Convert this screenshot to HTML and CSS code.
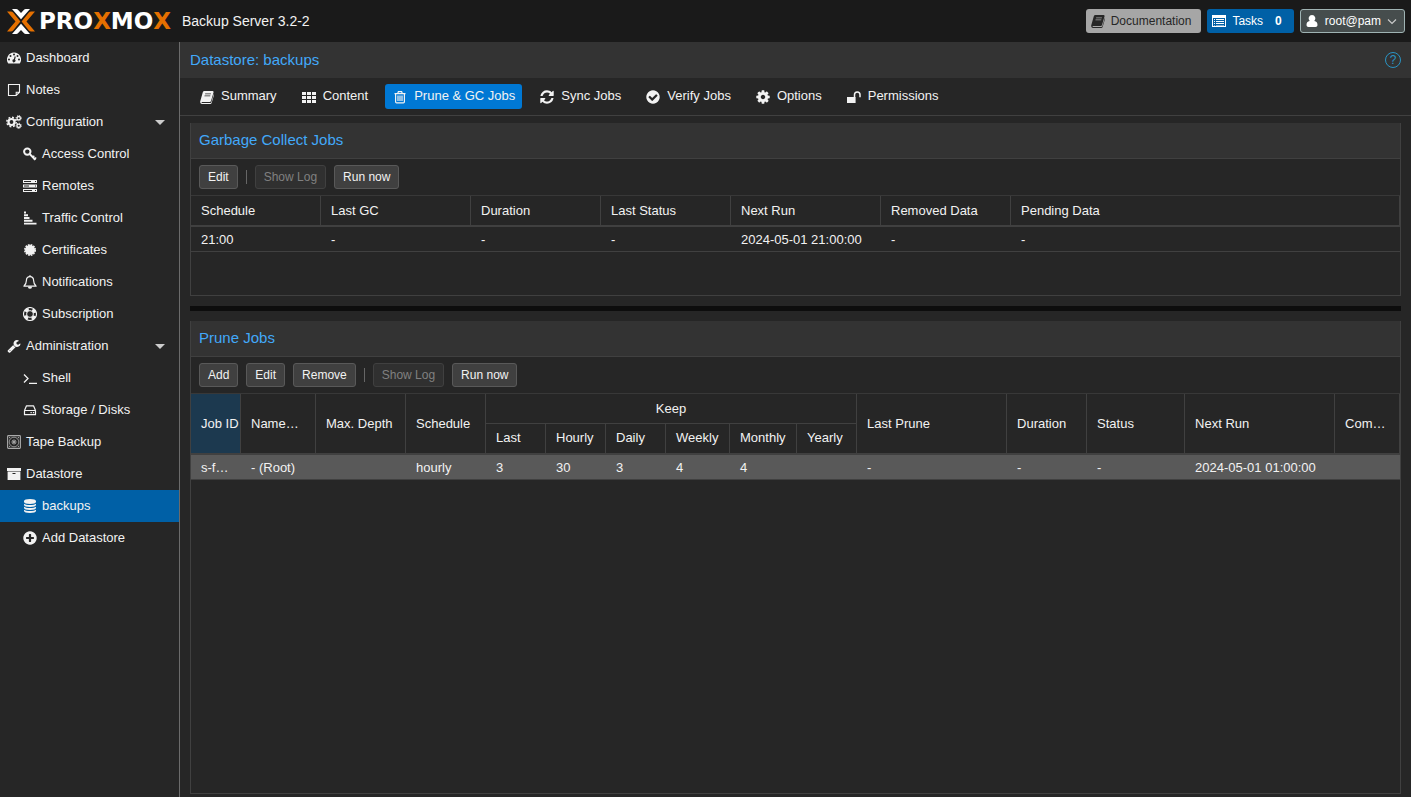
FILE: index.html
```html
<!DOCTYPE html>
<html lang="en">
<head>
<meta charset="utf-8">
<title>Proxmox Backup Server</title>
<link rel="stylesheet" href="styles.css">
</head>
<body>
<svg class="sprite" aria-hidden="true">
  <symbol id="i-dashboard" viewBox="0 0 14 14"><path fill-rule="evenodd" d="M7 1.500a7 7 0 0 1 5.900 10.800q-.2.300-.6.300H1.700q-.4 0-.6-.3A7 7 0 0 1 7 1.500zM2 7.500a1 1 0 1 0 0 2 1 1 0 0 0 0-2zM3.500 4a1 1 0 1 0 0 2 1 1 0 0 0 0-2zM7 2.500a1 1 0 1 0 0 2 1 1 0 0 0 0-2zM10.500 4a1 1 0 1 0 0 2 1 1 0 0 0 0-2zM12 7.500a1 1 0 1 0 0 2 1 1 0 0 0 0-2zM7.700 5.300l-.8 3A1.500 1.500 0 1 0 8 8.700l.8-3z"/></symbol>
  <symbol id="i-note" viewBox="0 0 14 14"><path fill="none" stroke="currentColor" stroke-width="1.100" d="M1.500 1.500h11v7.700l-3.300 3.300H1.500zM12.500 9.200H9.200v3.300"/></symbol>
  <symbol id="i-cog" viewBox="96 96 1600 1600"><path d="M1152 896q0-106-75-181t-181-75-181 75-75 181 75 181 181 75 181-75 75-181zm512-109v222q0 12-8 23t-20 13l-185 28q-19 54-39 91 35 50 107 138 10 12 10 25t-9 23q-27 37-99 108t-94 71q-12 0-26-9l-138-108q-44 23-91 38-16 136-29 186-7 28-36 28h-222q-14 0-24.500-8.500t-11.500-21.500l-28-184q-49-16-90-37l-141 107q-10 9-25 9-14 0-25-11-126-114-165-168-7-10-7-23 0-12 8-23 15-21 51-66.500t54-70.500q-27-50-41-99l-183-27q-13-2-21-12.500t-8-23.500v-222q0-12 8-23t19-13l186-28q14-46 39-92-40-57-107-138-10-12-10-24 0-10 9-23 26-36 98.500-107.500t94.500-71.500q13 0 26 10l138 107q44-23 91-38 16-136 29-186 7-28 36-28h222q14 0 24.500 8.500t11.500 21.500l28 184q49 16 90 37l142-107q9-9 24-9 13 0 25 10 129 119 165 170 7 8 7 22 0 12-8 23-15 21-51 66.500t-54 70.500q26 50 41 98l183 28q13 2 21 12.500t8 23.500z"/></symbol>
  <symbol id="i-cogs" viewBox="0 0 16 14"><g fill="none" stroke="currentColor"><circle cx="5.500" cy="7" r="3" stroke-width="2.200"/><circle cx="5.500" cy="7" r="4.700" stroke-width="1.500" stroke-dasharray="1.900 1.790"/><circle cx="12.700" cy="3.200" r="1.700" stroke-width="1.300"/><circle cx="12.700" cy="3.200" r="2.600" stroke-dasharray="1.100 .94"/><circle cx="12.700" cy="10.800" r="1.700" stroke-width="1.300"/><circle cx="12.700" cy="10.800" r="2.600" stroke-dasharray="1.100 .94"/></g></symbol>
  <symbol id="i-key" viewBox="0 0 14 14"><g fill="none" stroke="currentColor"><circle cx="4.300" cy="4.600" r="3.200" stroke-width="2"/><path stroke-width="1.900" d="M6.400 6.800l6 5.900"/><path stroke-width="1.500" d="M9.300 10.800l2-2M11 12.700l2.200-2.200"/></g></symbol>
  <symbol id="i-server" viewBox="0 0 14 14"><path fill-rule="evenodd" d="M0 1h14v3H0zM0 5.500h14v3H0zM0 10h14v3H0zM1 2v1h7V2zM12 2v1h1V2zM1 6.500v1h5v-1zM12 6.500v1h1v-1zM1 11v1h8v-1zM12 11v1h1v-1z"/></symbol>
  <symbol id="i-traffic" viewBox="0 0 14 14"><path d="M1 .6h2v2H1zM1 3.300h4v2H1zM1 6h5.500v2H1zM1 8.700h8.500v2H1zM1 11.800h12.500v1.700H1z"/></symbol>
  <symbol id="i-cert" viewBox="0 0 14 14"><circle cx="7" cy="7" r="5"/><circle cx="7" cy="7" r="5.200" fill="none" stroke="currentColor" stroke-width="1.600" stroke-dasharray="1.720 1"/></symbol>
  <symbol id="i-bell" viewBox="0 0 14 14"><path fill="none" stroke="currentColor" stroke-width="1.200" stroke-linejoin="round" d="M7 1.600c-2.500 0-3.600 1.900-3.600 4 0 2.800-1 4.200-2.500 5.600h12.200c-1.500-1.400-2.500-2.800-2.500-5.600 0-2.100-1.100-4-3.600-4z"/><path d="M6.300.3h1.400v1.500H6.300zM5.200 11.500h3.600A1.800 1.800 0 0 1 7 13.700a1.800 1.800 0 0 1-1.800-2.200z"/></symbol>
  <symbol id="i-life" viewBox="0 0 14 14"><g fill="none" stroke="currentColor"><circle cx="7" cy="7" r="6.500" stroke-width="1.100"/><circle cx="7" cy="7" r="3.400" stroke-width="1"/><circle cx="7" cy="7" r="5" stroke-width="3" stroke-dasharray="4 3.854" stroke-dashoffset="-1.927"/></g></symbol>
  <symbol id="i-wrench" viewBox="0 0 1792 1792"><path d="M448 1472q0-26-19-45t-45-19-45 19-19 45 19 45 45 19 45-19 19-45zm644-420l-682 682q-37 37-90 37-52 0-91-37l-106-108q-38-36-38-90 0-53 38-91l681-681q39 98 114.500 173.500t173.500 114.500zm634-435q0 39-23 106-47 134-164.500 217.500t-258.500 83.500q-185 0-316.500-131.500t-131.500-316.500 131.500-316.500 316.500-131.500q58 0 121.500 16.500t107.500 46.500q16 11 16 28t-16 28l-293 169v224l193 107q5-3 79-48.500t135.500-81 70.500-35.500q15 0 23.500 10t8.500 25z"/></symbol>
  <symbol id="i-shell" viewBox="0 0 14 14"><path fill="none" stroke="currentColor" stroke-width="1.300" d="M1 3.500L5 7.500l-4 4M6 12.300h8"/></symbol>
  <symbol id="i-disk" viewBox="0 0 14 14"><path fill="none" stroke="currentColor" stroke-width="1.200" stroke-linejoin="round" d="M1.500 7.500v4.200h11V7.500zL3.500 2.800h7l2 4.700"/><path d="M7.500 9h1.300v1.300H7.500zM9.900 9h1.300v1.300H9.900z"/></symbol>
  <symbol id="i-tape" viewBox="0 0 14 14"><g fill="none" stroke="#aaa"><rect x=".6" y=".6" width="12.800" height="12.800" rx=".8" stroke-width="1.100"/><circle cx="7" cy="7" r="4.800" stroke-width=".8"/><circle cx="7" cy="7" r="2" stroke-width=".9"/></g><circle cx="7" cy="7" r="1" fill="#ccc"/><path fill="#aaa" d="M2 2h1.500L2 3.500zM12 2v1.500L10.500 2zM2 12v-1.500L3.500 12zM12 12h-1.500l1.500-1.500z"/></symbol>
  <symbol id="i-archive" viewBox="0 0 14 14"><path fill-rule="evenodd" d="M0 1h14v3H0zM.6 4.600h12.800V13H.6zM5.500 6v1h3V6z"/></symbol>
  <symbol id="i-database" viewBox="0 0 14 14"><path d="M7 0c3.500 0 6 .8 6 2v1c0 1.100-2.500 2-6 2s-6-.9-6-2V2C1 .8 3.500 0 7 0zM1 4.700C2 5.500 4.200 6 7 6s5-.5 6-1.300V6c0 1.100-2.500 2-6 2S1 7.100 1 6zM1 7.700C2 8.500 4.200 9 7 9s5-.5 6-1.300V9c0 1.100-2.500 2-6 2s-6-.9-6-2zM1 10.700c1 .8 3.200 1.300 6 1.300s5-.5 6-1.300V12c0 1.100-2.500 2-6 2s-6-.9-6-2z"/></symbol>
  <symbol id="i-plus" viewBox="96 96 1600 1600"><path d="M1344 960v-128q0-26-19-45t-45-19h-256v-256q0-26-19-45t-45-19h-128q-26 0-45 19t-19 45v256h-256q-26 0-45 19t-19 45v128q0 26 19 45t45 19h256v256q0 26 19 45t45 19h128q26 0 45-19t19-45v-256h256q26 0 45-19t19-45zm320-64q0 209-103 385.500t-279.500 279.500-385.500 103-385.500-103-279.500-279.500-103-385.500 103-385.500 279.500-279.500 385.500-103 385.500 103 279.500 279.500 103 385.500z"/></symbol>
  <symbol id="i-check" viewBox="96 96 1600 1600"><path d="M1412 734q0-28-18-46l-91-90q-19-19-45-19t-45 19l-408 407-226-226q-19-19-45-19t-45 19l-91 90q-18 18-18 46 0 27 18 45l362 362q19 19 45 19 27 0 46-19l543-543q18-18 18-45zm252 162q0 209-103 385.500t-279.500 279.500-385.500 103-385.500-103-279.500-279.500-103-385.500 103-385.500 279.500-279.500 385.500-103 385.500 103 279.500 279.500 103 385.500z"/></symbol>
  <symbol id="i-refresh" viewBox="96 96 1600 1600"><path d="M1639 1056q0 5-1 7-64 268-268 434.500t-478 166.500q-146 0-282.500-55t-243.500-157l-129 129q-19 19-45 19t-45-19-19-45v-448q0-26 19-45t45-19h448q26 0 45 19t19 45-19 45l-137 137q71 66 161 102t187 36q134 0 250-65t186-179q11-17 53-117 8-23 30-23h192q13 0 22.500 9.500t9.500 22.500zm25-800v448q0 26-19 45t-45 19h-448q-26 0-45-19t-19-45 19-45l138-138q-148-137-349-137-134 0-250 65t-186 179q-11 17-53 117-8 23-30 23h-199q-13 0-22.500-9.500t-9.500-22.500v-7q65-268 270-434.500t480-166.500q146 0 284 55.500t245 156.500l130-129q19-19 45-19t45 19 19 45z"/></symbol>
  <symbol id="i-book" viewBox="0 0 14 14"><path fill-rule="evenodd" d="M4.400 1h8.200q1.200.2.900 1.500l-2.500 8.600q-.3 1-1.300 1H2q-.7 0-.6.500.1.400.7.400h8.100q.9 0 1.200-.9l2.400-8.200q.4.400.2 1l-2.300 7.800q-.4 1.200-1.500 1.200H1.900Q.4 13.700.2 12.200q-.1-.7.2-1.400L2.800 2.300Q3.200 1 4.400 1zM5.200 3.400l-.2.800h5.800l.2-.8zM4.600 5.500l-.2.800h5.800l.2-.8z"/></symbol>
  <symbol id="i-grid" viewBox="0 0 14 14"><path d="M0 2h4v3H0zM5 2h4v3H5zM10 2h4v3h-4zM0 6h4v3H0zM5 6h4v3H5zM10 6h4v3h-4zM0 10h4v3H0zM5 10h4v3H5zM10 10h4v3h-4z"/></symbol>
  <symbol id="i-trash" viewBox="0 0 14 14"><path fill="none" stroke="currentColor" stroke-width="1.200" d="M1.500 3.600h11M4.800 3.300L5.400 1.600h3.200l.6 1.700M2.600 4v7.800q0 1.100 1 1.100h6.800q1 0 1-1.100V4M5 5.500v5.600M7 5.500v5.600M9 5.500v5.600"/></symbol>
  <symbol id="i-unlock" viewBox="0 0 14 14"><path d="M0 7h8.600v6H0z"/><path fill="none" stroke="currentColor" stroke-width="1.500" d="M7.500 7.200V4.800a2.700 2.700 0 0 1 5.500 0v2.400"/></symbol>
  <symbol id="i-list" viewBox="0 0 14 14"><path fill-rule="evenodd" d="M0 1h14v12H0zM1 4v8h12V4z"/><path d="M2 5h1v1H2zM4 5h8v1H4zM2 7h1v1H2zM4 7h8v1H4zM2 9h1v1H2zM4 9h8v1H4zM2 11h1v.5H2zM4 11h8v.5H4z"/></symbol>
  <symbol id="i-user" viewBox="0 0 14 14"><path d="M7 1a3.400 3.400 0 0 1 2.300 5.900c2.300.2 3.200 1.800 3.200 4.200 0 1.200-.8 1.900-2 1.900h-7c-1.200 0-2-.7-2-1.900 0-2.400.9-4 3.200-4.200A3.400 3.400 0 0 1 7 1z"/></symbol>
  <symbol id="i-chevron" viewBox="0 0 10 10"><path fill="none" stroke="currentColor" stroke-width="1.100" d="M1 3.500l4 4 4-4"/></symbol>
  <symbol id="i-caret" viewBox="0 0 10 5"><path d="M0 0h10L5 5z"/></symbol>
</svg>

<header class="topbar">
  <div class="brand">
    <svg class="brand-mark" viewBox="0 0 28 25" aria-hidden="true">
      <path fill="#fff" d="M5 0h4.200q1.200 0 2 .9L14 4l2.800-3.100q.8-.9 2-.9H23l-9 10.300zM5 25h4.200q1.200 0 2-.9L14 21l2.800 3.100q.8.900 2 .9H23l-9-10.300z"/>
      <path fill="#e57000" d="M0 2.500h3.800q1.400 0 2.300 1l7.300 9-7.300 9q-.9 1-2.300 1H0l8.500-10zM28 2.500h-3.800q-1.400 0-2.300 1l-7.300 9 7.300 9q.9 1 2.300 1H28l-8.500-10z"/>
    </svg>
    <span class="wordmark">PRO<b>X</b>MO<b>X</b></span>
  </div>
  <h1 class="product">Backup Server 3.2-2</h1>
  <div class="top-actions">
    <button class="top-btn doc" type="button"><svg class="icon"><use href="#i-book"/></svg>Documentation</button>
    <button class="top-btn tasks" type="button"><svg class="icon"><use href="#i-list"/></svg>Tasks<span class="count">0</span></button>
    <button class="top-btn user" type="button"><svg class="icon"><use href="#i-user"/></svg>root@pam<svg class="chevron"><use href="#i-chevron"/></svg></button>
  </div>
</header>

<div class="workspace">
  <nav class="sidebar">
    <a class="nav-item" href="#"><svg class="icon"><use href="#i-dashboard"/></svg>Dashboard</a>
    <a class="nav-item" href="#"><svg class="icon"><use href="#i-note"/></svg>Notes</a>
    <a class="nav-item" href="#"><svg class="icon wide"><use href="#i-cogs"/></svg>Configuration<svg class="caret"><use href="#i-caret"/></svg></a>
    <a class="nav-item child" href="#"><svg class="icon"><use href="#i-key"/></svg>Access Control</a>
    <a class="nav-item child" href="#"><svg class="icon"><use href="#i-server"/></svg>Remotes</a>
    <a class="nav-item child" href="#"><svg class="icon"><use href="#i-traffic"/></svg>Traffic Control</a>
    <a class="nav-item child" href="#"><svg class="icon"><use href="#i-cert"/></svg>Certificates</a>
    <a class="nav-item child" href="#"><svg class="icon"><use href="#i-bell"/></svg>Notifications</a>
    <a class="nav-item child" href="#"><svg class="icon"><use href="#i-life"/></svg>Subscription</a>
    <a class="nav-item" href="#"><svg class="icon"><use href="#i-wrench"/></svg>Administration<svg class="caret"><use href="#i-caret"/></svg></a>
    <a class="nav-item child" href="#"><svg class="icon"><use href="#i-shell"/></svg>Shell</a>
    <a class="nav-item child" href="#"><svg class="icon"><use href="#i-disk"/></svg>Storage / Disks</a>
    <a class="nav-item" href="#"><svg class="icon"><use href="#i-tape"/></svg>Tape Backup</a>
    <a class="nav-item" href="#"><svg class="icon"><use href="#i-archive"/></svg>Datastore</a>
    <a class="nav-item child active" href="#" aria-current="page"><svg class="icon"><use href="#i-database"/></svg>backups</a>
    <a class="nav-item child" href="#"><svg class="icon"><use href="#i-plus"/></svg>Add Datastore</a>
  </nav>

  <main class="content">
    <div class="page-title">
      <h2>Datastore: backups</h2>
      <button class="help" type="button" aria-label="Help">?</button>
    </div>
    <div class="tabs" role="tablist">
      <button class="tab" type="button" role="tab"><svg class="icon"><use href="#i-book"/></svg>Summary</button>
      <button class="tab" type="button" role="tab"><svg class="icon"><use href="#i-grid"/></svg>Content</button>
      <button class="tab selected" type="button" role="tab" aria-selected="true"><svg class="icon"><use href="#i-trash"/></svg>Prune &amp; GC Jobs</button>
      <button class="tab" type="button" role="tab"><svg class="icon"><use href="#i-refresh"/></svg>Sync Jobs</button>
      <button class="tab" type="button" role="tab"><svg class="icon"><use href="#i-check"/></svg>Verify Jobs</button>
      <button class="tab" type="button" role="tab"><svg class="icon"><use href="#i-cog"/></svg>Options</button>
      <button class="tab" type="button" role="tab"><svg class="icon"><use href="#i-unlock"/></svg>Permissions</button>
    </div>

    <div class="panels">
      <section class="panel">
        <h3 class="panel-title">Garbage Collect Jobs</h3>
        <div class="toolbar">
          <button class="btn" type="button">Edit</button>
          <span class="sep"></span>
          <button class="btn" type="button" disabled>Show Log</button>
          <button class="btn" type="button">Run now</button>
        </div>
        <table class="grid gc">
          <colgroup><col class="w130"><col class="w150"><col class="w130"><col class="w130"><col class="w150"><col class="w130"><col></colgroup>
          <thead>
            <tr><th>Schedule</th><th>Last GC</th><th>Duration</th><th>Last Status</th><th>Next Run</th><th>Removed Data</th><th>Pending Data</th></tr>
          </thead>
          <tbody>
            <tr><td>21:00</td><td>-</td><td>-</td><td>-</td><td>2024-05-01 21:00:00</td><td>-</td><td>-</td></tr>
          </tbody>
        </table>
      </section>

      <div class="splitter"></div>

      <section class="panel grow">
        <h3 class="panel-title">Prune Jobs</h3>
        <div class="toolbar">
          <button class="btn" type="button">Add</button>
          <button class="btn" type="button">Edit</button>
          <button class="btn" type="button">Remove</button>
          <span class="sep"></span>
          <button class="btn" type="button" disabled>Show Log</button>
          <button class="btn" type="button">Run now</button>
        </div>
        <table class="grid prune">
          <colgroup><col class="w50"><col class="w75"><col class="w90"><col class="w80"><col class="w60"><col class="w60"><col class="w60"><col class="w64"><col class="w67"><col class="w60"><col class="w150"><col class="w80"><col class="w98"><col class="w150"><col></colgroup>
          <thead>
            <tr>
              <th class="sorted" rowspan="2">Job ID</th><th rowspan="2">Name…</th><th rowspan="2">Max. Depth</th><th rowspan="2">Schedule</th>
              <th class="group" colspan="6">Keep</th>
              <th rowspan="2">Last Prune</th><th rowspan="2">Duration</th><th rowspan="2">Status</th><th rowspan="2">Next Run</th><th rowspan="2">Com…</th>
            </tr>
            <tr><th>Last</th><th>Hourly</th><th>Daily</th><th>Weekly</th><th>Monthly</th><th>Yearly</th></tr>
          </thead>
          <tbody>
            <tr class="picked"><td>s-f…</td><td>- (Root)</td><td></td><td>hourly</td><td>3</td><td>30</td><td>3</td><td>4</td><td>4</td><td></td><td>-</td><td>-</td><td>-</td><td>2024-05-01 01:00:00</td><td></td></tr>
          </tbody>
        </table>
      </section>
    </div>
  </main>
</div>
</body>
</html>
```

FILE: styles.css
```css
* { box-sizing: border-box; }

body {
  margin: 0;
  height: 100vh;
  display: flex;
  flex-direction: column;
  background: #262626;
  color: #f2f2f2;
  font: 13px/16px "Liberation Sans", Arial, sans-serif;
}

h1, h2, h3 { margin: 0; font-weight: normal; }
button { font-family: inherit; color: inherit; cursor: pointer; white-space: nowrap; }
.sprite { display: none; }
.icon { width: 14px; height: 14px; flex: none; fill: currentColor; overflow: visible; }
.icon.wide { width: 16px; margin: 0 -1px; }

/* Top bar */
.topbar {
  display: flex;
  align-items: center;
  height: 42px;
  flex: none;
  padding: 0 6px 0 7px;
  background: #1a1a1a;
}
.brand { display: flex; align-items: center; gap: 4px; width: 175px; flex: none; }
.brand-mark { width: 28px; height: 25px; flex: none; }
.wordmark { font: bold 23px/26px "DejaVu Sans", sans-serif; color: #fff; }
.wordmark b { color: #e57000; }
.product { font-size: 14px; white-space: nowrap; }
.top-actions { display: flex; gap: 6px; margin-left: auto; }
.top-btn {
  display: flex;
  align-items: center;
  gap: 6px;
  height: 24px;
  padding: 0 9px 0 4px;
  border: 1px solid transparent;
  border-radius: 3px;
  font-size: 12px;
  color: #fff;
}
.top-btn.doc { background: #a6a6a6; color: #262626; }
.top-btn.tasks { background: #0060a6; padding-right: 11px; }
.top-btn.user { background: #464d4d; border-color: #9fb3b3; padding-right: 7px; }
.count { font-weight: bold; margin-left: 6px; }
.chevron { width: 10px; height: 10px; color: #ccc; }

/* Navigation */
.workspace { display: flex; flex: 1; min-height: 0; }
.sidebar { width: 180px; flex: none; border-right: 1px solid #6b6b6b; }
.nav-item {
  display: flex;
  align-items: center;
  gap: 5px;
  height: 32px;
  padding: 0 14px 0 7px;
  color: inherit;
  text-decoration: none;
}
.nav-item.child { padding-left: 23px; }
.nav-item.active { background: #0060a6; }
.caret { width: 10px; height: 5px; margin-left: auto; fill: #ccc; }

/* Content */
.content { display: flex; flex-direction: column; flex: 1; min-width: 0; }
.page-title {
  display: flex;
  align-items: center;
  justify-content: space-between;
  height: 36px;
  flex: none;
  padding: 0 10px;
  background: #333;
}
.page-title h2, .panel-title { font-size: 15px; line-height: 18px; color: #42a9fa; }
.help {
  width: 16px;
  height: 16px;
  padding: 0;
  border: 1px solid #2a94c4;
  border-radius: 50%;
  background: none;
  color: #2a94c4;
  font-size: 12px;
  line-height: 14px;
}
.tabs {
  display: flex;
  gap: 10px;
  height: 38px;
  flex: none;
  padding: 6px 12px;
  border-bottom: 1px solid #404040;
}
.tab {
  display: flex;
  align-items: center;
  gap: 7px;
  height: 25px;
  padding: 0 7px 2px 8px;
  border: 0;
  border-radius: 3px;
  background: none;
  font-size: 13px;
}
.tab .icon { margin-top: 2px; }
.tab.selected { background: #0078d4; }

.panels { display: flex; flex-direction: column; flex: 1; min-height: 0; padding: 7px 10px 3px; }
.panel { border: 1px solid #404040; border-top: 0; padding-bottom: 43px; }
.panel.grow { flex: 1; }
.panel-title { padding: 8px 8px 9px; background: #333; border-bottom: 1px solid #404040; }
.splitter { height: 5px; margin: 10px 0; flex: none; background: #0d0d0d; }

.toolbar { display: flex; align-items: center; gap: 8px; height: 36px; padding: 0 8px; }
.btn {
  height: 24px;
  padding: 0 8px;
  border: 1px solid #595959;
  border-radius: 3px;
  background: #404040;
  font-size: 12px;
}
.btn:disabled { border-color: #404040; background: #303030; color: #808080; }
.sep { width: 1px; height: 14px; background: #666; }

/* Tables */
.grid { width: 100%; table-layout: fixed; border-collapse: separate; border-spacing: 0; border-top: 1px solid #383838; }
.grid th, .grid td { padding: 0 0 0 10px; text-align: left; font-weight: normal; white-space: nowrap; overflow: hidden; }
.grid th { height: 30px; border-right: 1px solid #404040; }
.gc th, .prune th[rowspan], .prune tr + tr th { border-bottom: 2px solid #404040; }
.gc th { height: 31px; }
.prune tr + tr th { height: 31px; padding-bottom: 2px; }
.grid .group { padding-left: 0; text-align: center; border-bottom: 1px solid #404040; }
.grid .sorted { background: #1c394f; }
.grid td { height: 25px; padding-top: 2px; border-bottom: 1px solid #404040; }
.picked td { background: #595959; }
.w50 { width: 50px; }
.w60 { width: 60px; }
.w64 { width: 64px; }
.w67 { width: 67px; }
.w75 { width: 75px; }
.w80 { width: 80px; }
.w90 { width: 90px; }
.w98 { width: 98px; }
.w130 { width: 130px; }
.w150 { width: 150px; }
```
